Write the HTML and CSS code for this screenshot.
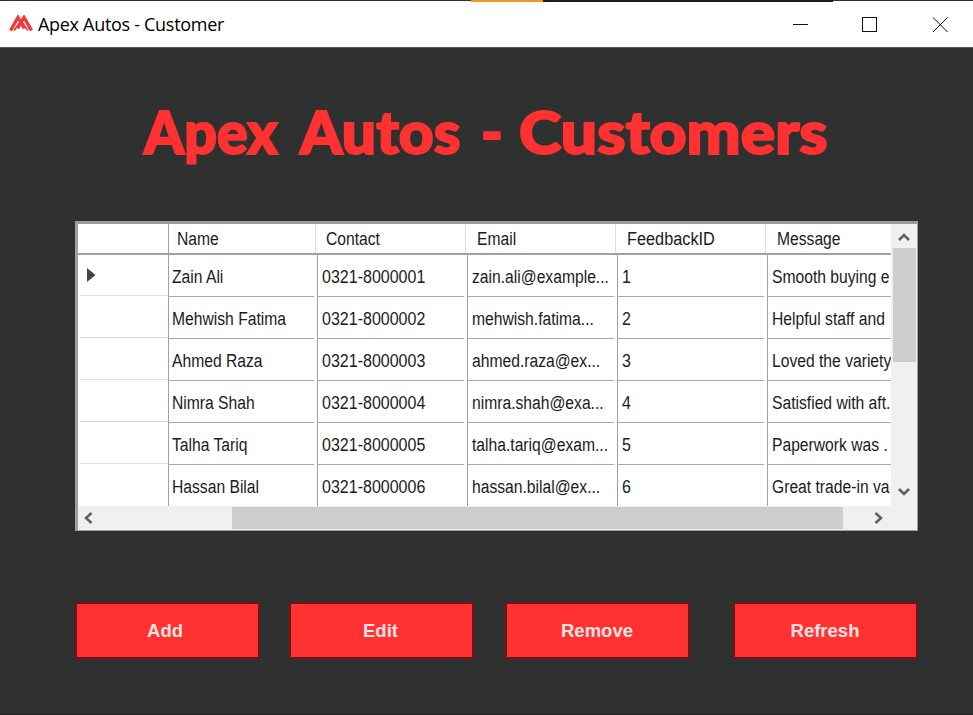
FILE: index.html
```
<!DOCTYPE html>
<html lang="en">
<head>
<meta charset="utf-8">
<title>Apex Autos - Customer</title>
<link rel="stylesheet" href="styles.css">
</head>
<body>
<div class="window">
  <div class="edge"><i class="edge-accent"></i><i class="edge-dark"></i></div>
  <header class="titlebar">
    <svg class="logo" width="24" height="17" viewBox="0 0 24 17"><g fill="none" stroke="#ef3838"><path d="M1.500 15.500 9 2.500l6.500 11M8.500 13.500 15 2.500l7.500 13" stroke-width="3.400"/><path d="M5 15.500 12 6l7 9.500" stroke-width="1.800"/></g></svg>
    <span class="caption">Apex Autos - Customer</span>
    <svg class="controls" width="160" height="17" viewBox="0 0 160 17" fill="none" stroke="#111"><path d="M1 8.500h15"/><rect x="70.500" y="1.500" width="14" height="14"/><path d="m141 1.500 14.500 14.500m0-14.500L141 16"/></svg>
  </header>
  <main>
    <h1><span class="w1">Apex</span><span class="w2">Autos</span><span class="w3">-</span><span class="w4">Customers</span></h1>
    <section class="frame">
      <div class="view">
        <div class="row head"><div></div><div><span>Name</span></div><div><span>Contact</span></div><div><span>Email</span></div><div><span class="fid">FeedbackID</span></div><div><span>Message</span></div></div>
        <div class="row"><div><svg width="9" height="14" viewBox="0 0 9 14"><path d="M0 0 8.500 7 0 14z" fill="#444"/></svg></div><div><span>Zain Ali</span></div><div><span class="num">0321-8000001</span></div><div><span>zain.ali@example...</span></div><div><span class="num">1</span></div><div><span>Smooth buying e</span></div></div>
        <div class="row"><div></div><div><span>Mehwish Fatima</span></div><div><span class="num">0321-8000002</span></div><div><span>mehwish.fatima...</span></div><div><span class="num">2</span></div><div><span>Helpful staff and</span></div></div>
        <div class="row"><div></div><div><span>Ahmed Raza</span></div><div><span class="num">0321-8000003</span></div><div><span>ahmed.raza@ex...</span></div><div><span class="num">3</span></div><div><span>Loved the variety</span></div></div>
        <div class="row"><div></div><div><span>Nimra Shah</span></div><div><span class="num">0321-8000004</span></div><div><span>nimra.shah@exa...</span></div><div><span class="num">4</span></div><div><span>Satisfied with aft.</span></div></div>
        <div class="row"><div></div><div><span>Talha Tariq</span></div><div><span class="num">0321-8000005</span></div><div><span>talha.tariq@exam...</span></div><div><span class="num">5</span></div><div><span>Paperwork was .</span></div></div>
        <div class="row"><div></div><div><span>Hassan Bilal</span></div><div><span class="num">0321-8000006</span></div><div><span>hassan.bilal@ex...</span></div><div><span class="num">6</span></div><div><span>Great trade-in va</span></div></div>
      </div>
      <div class="vbar">
        <svg width="12" height="8" viewBox="0 0 12 8"><path d="m1 7 5-5 5 5"/></svg>
        <i></i>
        <svg width="12" height="8" viewBox="0 0 12 8"><path d="m1 1 5 5 5-5"/></svg>
      </div>
      <div class="hbar">
        <svg width="10" height="12" viewBox="0 0 10 12"><path d="M8.500 1 3 6l5.500 5"/></svg>
        <i></i>
        <svg width="10" height="12" viewBox="0 0 10 12"><path d="m1.500 1 5.500 5-5.500 5"/></svg>
      </div>
    </section>
    <div class="actions">
      <button>Add</button><button>Edit</button><button>Remove</button><button>Refresh</button>
    </div>
  </main>
</div>
</body>
</html>
```
FILE: styles.css
```
* { box-sizing: border-box; }
body { margin: 0; overflow: hidden; background: #2f3130; }
.window { width: 973px; height: 715px; display: flex; flex-direction: column; background: #2f3130; border-bottom: 1px solid #252525; }
.edge { height: 2px; display: flex; padding-left: 471px; background: linear-gradient(#302f33 1px, #fff 1px); }
.edge-accent { width: 72px; background: #f79421; }
.edge-dark { width: 290px; background: #1d1b1f; }
.titlebar { height: 45px; background: #fff; display: flex; align-items: center; padding: 0 0 0 9px; }
.logo { flex: none; margin-bottom: 3px; }
.caption { margin: 0 0 2px 5px; font: 18px/24px "Open Sans", sans-serif; color: #000; white-space: nowrap; flex: 1; letter-spacing: -.3px; }
.controls { margin: 0 21px 1px 0; }
main { border-top: 1px solid #585858; flex: 1; padding: 49px 0 0 75px; }
h1 { margin: 0 0 0 69px; height: 124px; display: flex; font: 900 58.500px/68px Lato, sans-serif; color: #ff3131; -webkit-text-stroke: 2px #ff3131; white-space: nowrap; }
h1 span { transform-origin: 0 50%; }
.w1 { width: 156px; transform: scaleX(.98); }
.w2 { width: 181px; transform: scaleX(1.035); }
.w3 { width: 38px; }
.w4 { transform: scaleX(1.097); }
.frame { width: 843px; height: 310px; border: solid #a0a0a0; border-width: 3px 1px 1px 3px; border-top-color: #9a9a9a; display: grid; grid-template: 282px 24px / 814px 25px; background: #f0f0f0; }
.view { overflow: hidden; background: #fff; width: 813px; }
.row { height: 42px; display: grid; grid-template-columns: 90px 149px 150px 150px 150px 127px; font: 18px/42px "Liberation Sans", Arial, sans-serif; color: #1b1b24; }
.row > div { padding-left: 4px; padding-top: 2px; white-space: nowrap; background: linear-gradient(#a9a9a9, #a9a9a9) 0 0 / calc(100% - 3px) 1px no-repeat, linear-gradient(#a0a0a0, #a0a0a0) 0 0 / 1px 100% no-repeat; }
.row > div:first-child { background: linear-gradient(#dedede, #dedede) 2px 100% / 100% 1px no-repeat; padding: 0 0 0 9px; display: flex; align-items: center; height: 42px; }
.row:last-child > div:first-child { background: none; }
.row span { display: inline-block; transform: scaleX(.87); transform-origin: 0 50%; }
.row .num { transform: scaleX(.89); }
.row .fid { transform: scaleX(.905); }
.row > div:nth-child(n+3) { padding-left: 5px; }
.row > div:nth-child(4) { padding-left: 4.500px; }
.row.head { height: 31px; line-height: 28px; border-bottom: 2px solid #a0a0a0; }
.row.head > div, .row.head > div:first-child { height: 29px; padding: 1px 0 0 9px; background: linear-gradient(#dedede, #dedede) calc(100% - 1px) 0 / 1px 100% no-repeat; }
.row.head > div:first-child, .row.head > div:last-child { background: none; }
.row.head > div:nth-child(2) { box-shadow: inset 1px 0 #a0a0a0; }
.row.head > div:nth-child(n+3) { padding-left: 10px; }
.row.head > div:nth-child(3) { padding-left: 9px; }
.head + .row { margin-top: -1px; }
.head + .row > div:not(:first-child) { background: linear-gradient(#a0a0a0, #a0a0a0) 0 0 / 1px 100% no-repeat; }
.vbar { display: flex; flex-direction: column; align-items: center; padding: 9px 1px 0 0; }
.vbar i { width: 23px; height: 114px; margin: 7px 0 126px; background: #cdcdcd; }
svg { display: block; flex: none; }
.vbar path, .hbar path { fill: none; stroke: #606060; stroke-width: 2.500; }
.hbar { grid-column: 1 / 3; display: flex; align-items: center; padding-left: 5px; }
.hbar i { width: 611px; height: 22px; margin: 0 31px 0 139px; background: #cdcdcd; }
.actions { display: flex; margin-top: 71px; }
button { width: 185px; height: 57px; padding: 0 5px 0 0; border: 2px solid #701314; border-radius: 0; background: #ff3131; color: #ffe3e3; font: bold 18.500px "Liberation Sans", Arial, sans-serif; }
button + button { margin-left: 29px; padding: 0 2px 0 0; }
button:nth-child(3) { margin-left: 31px; padding: 0 1px 0 0; }
button:nth-child(4) { margin-left: 43px; padding-right: 1px; }
```
